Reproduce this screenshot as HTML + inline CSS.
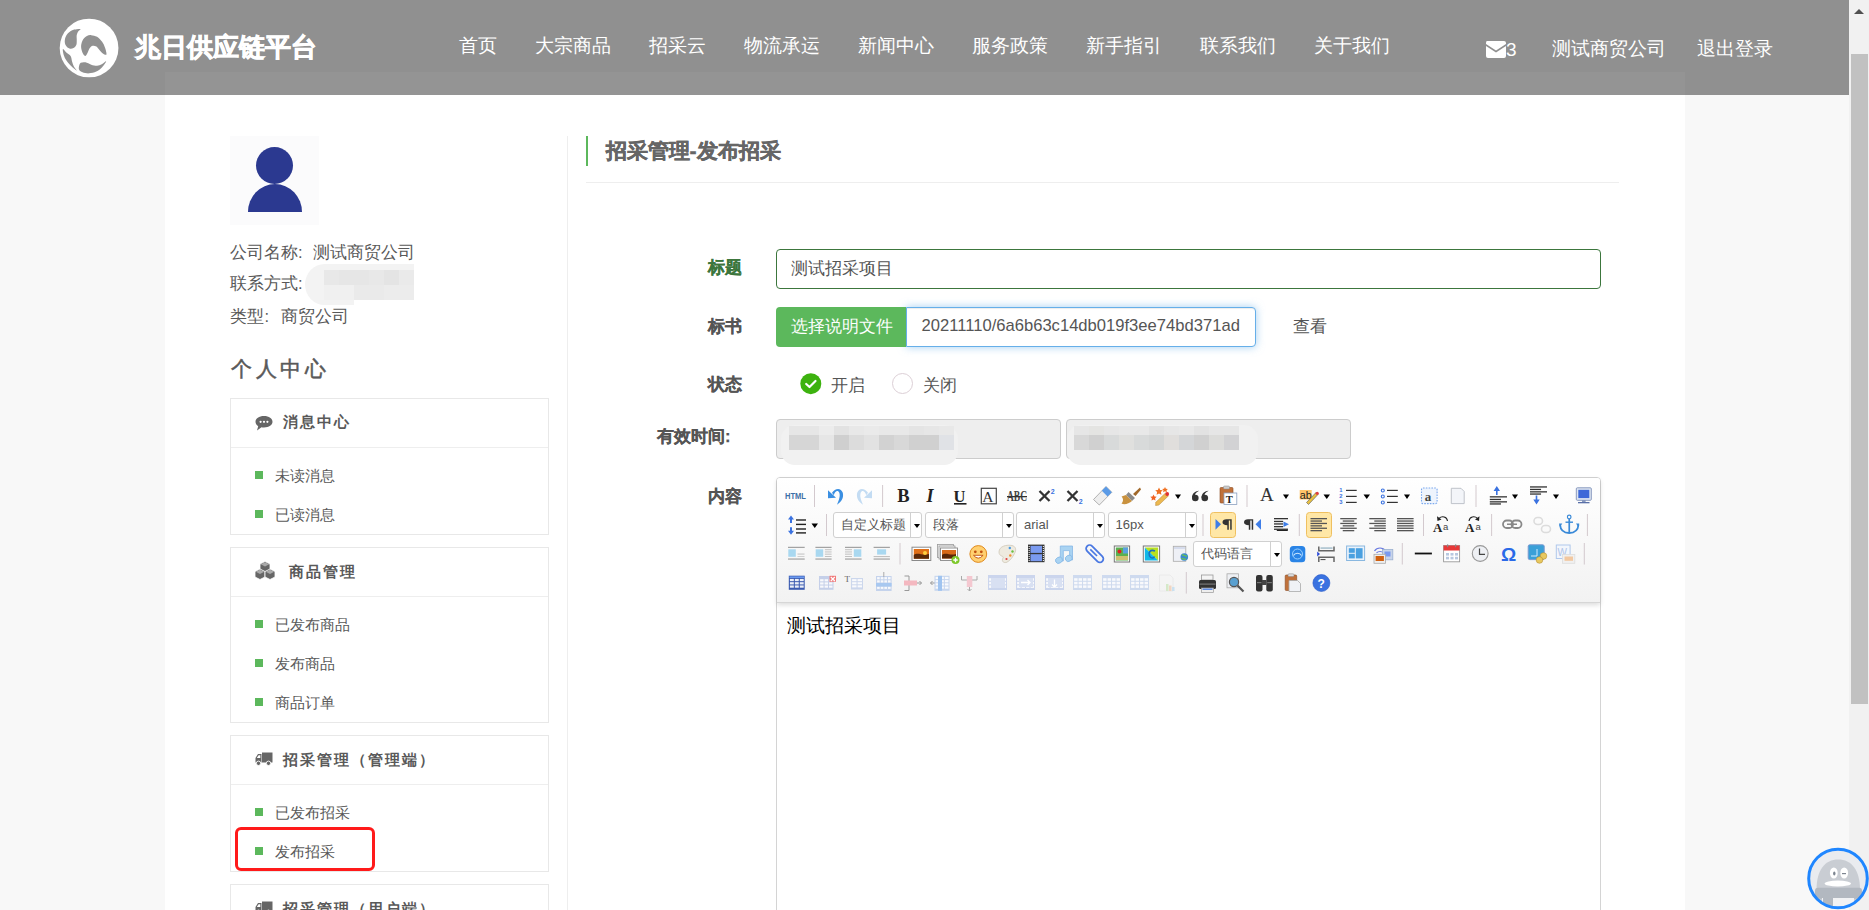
<!DOCTYPE html>
<html><head><meta charset="utf-8">
<style>
*{margin:0;padding:0;box-sizing:border-box}
html,body{width:1869px;height:910px;overflow:hidden;background:#f8f8f8;font-family:"Liberation Sans",sans-serif}
.a{position:absolute}
.t{position:absolute;white-space:nowrap;line-height:1}
#container{left:165px;top:72px;width:1520px;height:838px;background:#fff}
#header{left:0;top:0;width:1849px;height:95px;background:rgba(0,0,0,0.42)}
#sb{left:1849px;top:0;width:20px;height:910px;background:#f1f1f1}
#thumb{left:1851px;top:54px;width:17px;height:650px;background:#c1c1c1}
.nav{color:#fff;font-size:19px}
.side{color:#595959;font-size:16.5px}
.box{position:absolute;left:230px;width:319px;border:1px solid #e8e8e8;background:#fff}
.boxdiv{position:absolute;left:231px;width:317px;height:1px;background:#eeeeee}
.gsq{position:absolute;left:255px;width:8px;height:8px;background:#5cb85c}
.item{position:absolute;left:275px;color:#595959;font-size:15px;line-height:1;white-space:nowrap}
.bh{position:absolute;color:#595959;font-size:14.5px;font-weight:bold;letter-spacing:2px;line-height:1;white-space:nowrap;font-family:"Liberation Serif",serif}
.lbl{position:absolute;font-size:16.5px;font-weight:bold;color:#555;-webkit-text-stroke:0.25px currentColor;line-height:1;white-space:nowrap}
.combo{position:absolute;width:89px;height:26px;border:1px solid #d0d0d0;border-radius:3px;background:#fff}
.combo:after{content:"";position:absolute;right:10px;top:-1px;width:1px;height:26px;background:#d0d0d0}
.combo:before{content:"";position:absolute;right:1px;top:10.5px;border-left:3.5px solid transparent;border-right:3.5px solid transparent;border-top:4.5px solid #000}
.ct{position:absolute;left:7px;top:5px;font-size:13px;line-height:1;color:#555;white-space:nowrap;overflow:hidden}
</style></head><body>
<div id="container" class="a"></div>

<!-- sidebar -->
<div class="a" style="left:230px;top:136px;width:89px;height:89px;background:#fbfbfc"></div>
<div class="a" style="left:256px;top:147px;width:37px;height:37px;border-radius:50%;background:#2b3990"></div>
<div class="a" style="left:248px;top:184px;width:54px;height:28px;border-radius:27px 27px 0 0/28px 28px 0 0;background:#2b3990;box-shadow:0 0 0 0 #fff"></div>

<div class="t side" style="left:230px;top:243.5px">公司名称</div><div class="t side" style="left:298px;top:243.5px">:</div><div class="t side" style="left:313px;top:243.5px">测试商贸公司</div>
<div class="t side" style="left:230px;top:275px">联系方式</div><div class="t side" style="left:298px;top:275px">:</div>
<div class="a" style="left:305px;top:264px;width:109px;height:41px;background:#f3f3f3;border-radius:20px 0 0 20px/21px 0 0 21px"></div><div class="a" style="left:354px;top:299.7px;width:60px;height:6px;background:#fff"></div><div class="a" style="left:324px;top:270px;width:15px;height:15px;background:#e8e8e8"></div><div class="a" style="left:324px;top:285px;width:15px;height:15px;background:#f0f0f0"></div><div class="a" style="left:339px;top:270px;width:15px;height:15px;background:#e6e6e6"></div><div class="a" style="left:339px;top:285px;width:15px;height:15px;background:#f0f0f0"></div><div class="a" style="left:354px;top:270px;width:15px;height:15px;background:#e6e6e6"></div><div class="a" style="left:354px;top:285px;width:15px;height:15px;background:#eaeaea"></div><div class="a" style="left:369px;top:270px;width:15px;height:15px;background:#e8e8e8"></div><div class="a" style="left:369px;top:285px;width:15px;height:15px;background:#eaeaea"></div><div class="a" style="left:384px;top:270px;width:15px;height:15px;background:#e4e4e4"></div><div class="a" style="left:384px;top:285px;width:15px;height:15px;background:#ececec"></div><div class="a" style="left:399px;top:270px;width:15px;height:15px;background:#eaeaea"></div><div class="a" style="left:399px;top:285px;width:15px;height:15px;background:#ececec"></div>
<div class="t side" style="left:230px;top:307.5px">类型</div><div class="t side" style="left:264.5px;top:307.5px">:</div><div class="t side" style="left:280.5px;top:307.5px">商贸公司</div>

<div class="t" style="left:231px;top:359px;font-size:21px;letter-spacing:3.5px;color:#595959;-webkit-text-stroke:0.5px #595959;font-family:'Liberation Serif',serif">个人中心</div>

<div class="a" style="left:567px;top:136px;width:1px;height:774px;background:#eeeeee"></div>

<div class="box" style="top:398px;height:137px"></div>
<div class="boxdiv" style="top:447px"></div>
<svg class="a" style="left:255px;top:415px" width="18" height="16" viewBox="0 0 18 16"><path d="M9,1 C14,1 17.5,3.5 17.5,6.8 C17.5,10 14,12.5 9,12.5 C8,12.5 7.2,12.4 6.5,12.2 L2,15.5 L3.2,11.3 C1.5,10.2 0.5,8.6 0.5,6.8 C0.5,3.5 4,1 9,1Z" fill="#666"/><circle cx="5.6" cy="6.8" r="1.1" fill="#fff"/><circle cx="9" cy="6.8" r="1.1" fill="#fff"/><circle cx="12.4" cy="6.8" r="1.1" fill="#fff"/></svg>
<div class="bh" style="left:283px;top:414.5px">消息中心</div>
<div class="gsq" style="top:471px"></div><div class="item" style="top:468px">未读消息</div>
<div class="gsq" style="top:510px"></div><div class="item" style="top:507px">已读消息</div>

<div class="box" style="top:547px;height:176px"></div>
<div class="boxdiv" style="top:596px"></div>
<svg class="a" style="left:254px;top:561px" width="22" height="19" viewBox="0 0 22 19"><g fill="#666" stroke="#fff" stroke-width="0.8"><path d="M11,0.5 L16,3 L16,8.5 L11,11 L6,8.5 L6,3Z"/><path d="M6,8 L11,10.5 L11,16 L6,18.5 L1,16 L1,10.5Z"/><path d="M16,8 L21,10.5 L21,16 L16,18.5 L11,16 L11,10.5Z"/></g><g fill="#aaa"><path d="M11,1.3 L15.2,3.3 L11,5.4 L6.8,3.3Z"/><path d="M6,8.8 L10.2,10.8 L6,12.9 L1.8,10.8Z"/><path d="M16,8.8 L20.2,10.8 L16,12.9 L11.8,10.8Z"/></g></svg>
<div class="bh" style="left:288.5px;top:564.5px">商品管理</div>
<div class="gsq" style="top:620px"></div><div class="item" style="top:617px">已发布商品</div>
<div class="gsq" style="top:659px"></div><div class="item" style="top:656px">发布商品</div>
<div class="gsq" style="top:698px"></div><div class="item" style="top:695px">商品订单</div>

<div class="box" style="top:735px;height:137px"></div>
<div class="boxdiv" style="top:784px"></div>
<svg class="a" style="left:255px;top:752px" width="18" height="14" viewBox="0 0 18 14"><path d="M7,0.5 H17.5 V10.5 H7Z" fill="#666"/><path d="M0.5,6 L3,2 H6.5 V10.5 H0.5Z" fill="#666"/><path d="M1.8,6 L3.6,3.2 H5.3 V6Z" fill="#fff"/><circle cx="3.5" cy="11.3" r="2.2" fill="#666" stroke="#fff" stroke-width="0.9"/><circle cx="13.5" cy="11.3" r="2.2" fill="#666" stroke="#fff" stroke-width="0.9"/></svg>
<div class="bh" style="left:282.5px;top:753px">招采管理（管理端）</div>
<div class="gsq" style="top:808px"></div><div class="item" style="top:805px">已发布招采</div>
<div class="gsq" style="top:847px"></div><div class="item" style="top:844px">发布招采</div>
<div class="a" style="left:235px;top:827px;width:140px;height:44px;border:3.5px solid #ff1a1a;border-radius:6px"></div>

<div class="box" style="top:884px;height:100px"></div>
<svg class="a" style="left:255px;top:901px" width="18" height="14" viewBox="0 0 18 14"><path d="M7,0.5 H17.5 V10.5 H7Z" fill="#666"/><path d="M0.5,6 L3,2 H6.5 V10.5 H0.5Z" fill="#666"/><path d="M1.8,6 L3.6,3.2 H5.3 V6Z" fill="#fff"/><circle cx="3.5" cy="11.3" r="2.2" fill="#666" stroke="#fff" stroke-width="0.9"/><circle cx="13.5" cy="11.3" r="2.2" fill="#666" stroke="#fff" stroke-width="0.9"/></svg>
<div class="bh" style="left:282.5px;top:902px">招采管理（用户端）</div>

<!-- main form -->
<div class="a" style="left:586px;top:136px;width:2px;height:30px;background:#5cb85c"></div>
<div class="t" style="left:605.5px;top:139.5px;font-size:21.2px;font-weight:bold;color:#666;-webkit-text-stroke:0.4px #666">招采管理-发布招采</div>
<div class="a" style="left:586px;top:182px;width:1033px;height:1px;background:#eeeeee"></div>

<div class="lbl" style="left:708px;top:259px;color:#3c763d">标题</div>
<div class="a" style="left:776px;top:249px;width:825px;height:40px;border:1px solid #3c763d;border-radius:4px;background:#fff"></div>
<div class="t" style="left:791px;top:260px;font-size:16.5px;color:#555">测试招采项目</div>

<div class="lbl" style="left:708px;top:318px">标书</div>
<div class="a" style="left:906px;top:307px;width:350px;height:40px;border:1px solid #66afe9;border-radius:0 4px 4px 0;background:#fff;box-shadow:inset 0 1px 1px rgba(0,0,0,.075),0 0 8px rgba(102,175,233,.6)"></div>
<div class="a" style="left:776px;top:307px;width:130px;height:40px;background:#5cb85c;border-radius:4px 0 0 4px"></div>
<div class="t" style="left:791px;top:318px;font-size:16.5px;color:#fff">选择说明文件</div>
<div class="t" style="left:921.5px;top:317.5px;font-size:16.6px;color:#555">20211110/6a6b63c14db019f3ee74bd371ad</div>
<div class="t" style="left:1293px;top:318px;font-size:16.5px;color:#555">查看</div>

<div class="lbl" style="left:708px;top:376px">状态</div>
<svg class="a" style="left:800px;top:373px" width="22" height="22" viewBox="0 0 22 22"><circle cx="10.8" cy="10.7" r="10.5" fill="#3db20f"/><path d="M6.2,11 L9.5,14 L15.5,8" fill="none" stroke="#fff" stroke-width="2.2" stroke-linecap="round" stroke-linejoin="round"/></svg>
<div class="t" style="left:831px;top:377px;font-size:16.5px;color:#555">开启</div>
<div class="a" style="left:892px;top:373px;width:21px;height:21px;border:1px solid #dccfd6;border-radius:50%"></div>
<div class="t" style="left:923px;top:377px;font-size:16.5px;color:#555">关闭</div>

<div class="lbl" style="left:657px;top:428px">有效时间:</div>
<div class="a" style="left:776px;top:419px;width:285px;height:40px;background:#eeeeee;border:1px solid #cccccc;border-radius:4px"></div>
<div class="a" style="left:1066px;top:419px;width:285px;height:40px;background:#eeeeee;border:1px solid #cccccc;border-radius:4px"></div>

<div class="a" style="left:781px;top:424.6px;width:177px;height:40.4px;background:#f1f1f1;border-radius:14px"></div><div class="a" style="left:789px;top:426px;width:15px;height:9px;background:#e6e6e6"></div><div class="a" style="left:789px;top:435px;width:15px;height:15px;background:#d6d6d6"></div><div class="a" style="left:804px;top:426px;width:15px;height:9px;background:#e6e6e6"></div><div class="a" style="left:804px;top:435px;width:15px;height:15px;background:#d6d6d6"></div><div class="a" style="left:819px;top:426px;width:15px;height:9px;background:#ececec"></div><div class="a" style="left:819px;top:435px;width:15px;height:15px;background:#e6e6e6"></div><div class="a" style="left:834px;top:426px;width:15px;height:9px;background:#e2e2e2"></div><div class="a" style="left:834px;top:435px;width:15px;height:15px;background:#cfcfcf"></div><div class="a" style="left:849px;top:426px;width:15px;height:9px;background:#e8e8e8"></div><div class="a" style="left:849px;top:435px;width:15px;height:15px;background:#dcdcdc"></div><div class="a" style="left:864px;top:426px;width:15px;height:9px;background:#eaeaea"></div><div class="a" style="left:864px;top:435px;width:15px;height:15px;background:#e2e2e2"></div><div class="a" style="left:879px;top:426px;width:15px;height:9px;background:#e8e8e8"></div><div class="a" style="left:879px;top:435px;width:15px;height:15px;background:#d2d2d2"></div><div class="a" style="left:894px;top:426px;width:15px;height:9px;background:#e8e8e8"></div><div class="a" style="left:894px;top:435px;width:15px;height:15px;background:#d8d8d8"></div><div class="a" style="left:909px;top:426px;width:15px;height:9px;background:#e4e4e4"></div><div class="a" style="left:909px;top:435px;width:15px;height:15px;background:#d0d0d0"></div><div class="a" style="left:924px;top:426px;width:15px;height:9px;background:#e6e6e6"></div><div class="a" style="left:924px;top:435px;width:15px;height:15px;background:#d0d0d0"></div><div class="a" style="left:939px;top:426px;width:15px;height:9px;background:#e8e8e8"></div><div class="a" style="left:939px;top:435px;width:15px;height:15px;background:#e0e2e6"></div><div class="a" style="left:1067px;top:424.6px;width:191px;height:40.4px;background:#f1f1f1;border-radius:14px"></div><div class="a" style="left:1074px;top:426px;width:15px;height:9px;background:#e6e6e6"></div><div class="a" style="left:1074px;top:435px;width:15px;height:15px;background:#d8d8d8"></div><div class="a" style="left:1089px;top:426px;width:15px;height:9px;background:#e4e4e2"></div><div class="a" style="left:1089px;top:435px;width:15px;height:15px;background:#d0d0d0"></div><div class="a" style="left:1104px;top:426px;width:15px;height:9px;background:#e6e6e6"></div><div class="a" style="left:1104px;top:435px;width:15px;height:15px;background:#d8dada"></div><div class="a" style="left:1119px;top:426px;width:15px;height:9px;background:#e8e8e8"></div><div class="a" style="left:1119px;top:435px;width:15px;height:15px;background:#e0e0de"></div><div class="a" style="left:1134px;top:426px;width:15px;height:9px;background:#e8e8e8"></div><div class="a" style="left:1134px;top:435px;width:15px;height:15px;background:#d8dada"></div><div class="a" style="left:1149px;top:426px;width:15px;height:9px;background:#e2e2e2"></div><div class="a" style="left:1149px;top:435px;width:15px;height:15px;background:#d4d6d6"></div><div class="a" style="left:1164px;top:426px;width:15px;height:9px;background:#e6e6e6"></div><div class="a" style="left:1164px;top:435px;width:15px;height:15px;background:#e0dedc"></div><div class="a" style="left:1179px;top:426px;width:15px;height:9px;background:#e8e8e8"></div><div class="a" style="left:1179px;top:435px;width:15px;height:15px;background:#d4d6d8"></div><div class="a" style="left:1194px;top:426px;width:15px;height:9px;background:#e2e2e2"></div><div class="a" style="left:1194px;top:435px;width:15px;height:15px;background:#d0d0d0"></div><div class="a" style="left:1209px;top:426px;width:15px;height:9px;background:#e6e6e6"></div><div class="a" style="left:1209px;top:435px;width:15px;height:15px;background:#dcdcda"></div><div class="a" style="left:1224px;top:426px;width:15px;height:9px;background:#e6e6e6"></div><div class="a" style="left:1224px;top:435px;width:15px;height:15px;background:#d2d2d4"></div>
<div class="lbl" style="left:708px;top:488px">内容</div>
<div class="a" id="editor" style="left:776px;top:477px;width:825px;height:440px;border:1px solid #d4d4d4;border-radius:4px;background:#fff"></div>
<div class="a" style="left:777px;top:478px;width:823px;height:125px;border-radius:3px 3px 0 0;background:linear-gradient(#ffffff,#f2f2f2);box-shadow:0 2px 5px rgba(0,0,0,.14)"></div>
<div class="a" style="left:777px;top:602px;width:823px;height:1px;background:#d6d6d6"></div>
<!--TB--><div class="combo" style="left:833px;top:512px"><div class="ct" style="width:69px">自定义标题</div></div>
<div class="combo" style="left:925px;top:512px"><div class="ct">段落</div></div>
<div class="combo" style="left:1016px;top:512px"><div class="ct">arial</div></div>
<div class="combo" style="left:1107.5px;top:512px"><div class="ct">16px</div></div>
<div class="combo" style="left:1193px;top:541px"><div class="ct">代码语言</div></div>
<svg class="a" style="left:0;top:0" width="1869" height="910" viewBox="0 0 1869 910"><text x="785" y="498.6" font-family="Liberation Sans" font-weight="bold" font-size="8.2" fill="#3d70a8" textLength="21" lengthAdjust="spacingAndGlyphs">HTML</text><rect x="814.0" y="485" width="1" height="22" fill="#d3c9ce"/><path d="M828,490.2 L828,498.3 L836,497.7Z M832,492.8 C835,488 841,487.2 842.8,492.8 C844,497.5 841.5,502 837,504.8 C839,500 840.6,496 839.2,492.6 C838,490 835.2,490.6 833.8,495.2Z" fill="#3a8fe2"/><path d="M872.0,490.2 L872.0,498.3 L864.0,497.7Z M868.0,492.8 C865.0,488 859.0,487.2 857.2,492.8 C856.0,497.5 858.5,502 863.0,504.8 C861.0,500 859.4,496 860.8,492.6 C862.0,490 864.8,490.6 866.2,495.2Z" fill="#c3dcf3"/><rect x="882.1" y="485" width="1" height="22" fill="#d3c9ce"/><text x="897.3" y="502.3" font-family="Liberation Serif" font-weight="bold" font-size="18.5" fill="#222">B</text><text x="926.5" y="502.2" font-family="Liberation Serif" font-weight="bold" font-style="italic" font-size="18" fill="#222">I</text><text x="953.5" y="502" font-family="Liberation Serif" font-weight="bold" font-size="16.5" fill="#222">U</text><rect x="954" y="503" width="12.5" height="1.6" fill="#222"/><rect x="981.3" y="488.3" width="15" height="15.5" fill="none" stroke="#444" stroke-width="1.2"/><text x="982.3" y="501.6" font-family="Liberation Serif" font-size="15.5" fill="#333">A</text><text x="1007" y="501.2" font-family="Liberation Serif" font-weight="bold" font-size="14" fill="#444" textLength="20" lengthAdjust="spacingAndGlyphs">ABC</text><rect x="1007" y="496" width="20" height="1.3" fill="#333"/><path d="M1039.5,491 L1049.5,501 M1049.5,491 L1039.5,501" stroke="#333" stroke-width="2.3"/><text x="1050.8" y="494" font-family="Liberation Sans" font-weight="bold" font-size="7" fill="#3a72e0">2</text><path d="M1067.5,491 L1077.5,501 M1077.5,491 L1067.5,501" stroke="#333" stroke-width="2.3"/><text x="1078.8" y="503.5" font-family="Liberation Sans" font-weight="bold" font-size="7" fill="#3a72e0">2</text><path d="M1093.5,499.5 L1106,486.5 L1111.8,492.3 L1099.3,505Z" fill="#eeeeee" stroke="#a0a0a0" stroke-width="0.8"/><path d="M1101.8,490.8 L1106,486.5 L1111.8,492.3 L1107.6,496.6Z" fill="#5a9ae6"/><path d="M1133,494 L1140,487.5 L1141,489.5 L1135.5,496Z" fill="#a0682a"/><path d="M1128.5,492 L1135,498 L1132,501 L1126,495Z" fill="#8a8a8a"/><path d="M1126,495 L1132,501 C1129,504 1124,505 1121.5,503.5 C1124,501 1123,498 1121.6,496.5 C1123,496 1124.5,495.5 1126,495Z" fill="#c9923f"/><path d="M1155.8,502.3 L1165.3,493.2 L1168.3,496 L1158.8,505.1 L1155.6,505.5Z" fill="#ecb850" stroke="#b08030" stroke-width="0.5"/><circle cx="1167.2" cy="494" r="1.9" fill="#e03030"/><path d="M1159,487.5 l1.2,2.5 2.6,0.3 -1.9,1.8 0.5,2.6 -2.4,-1.3 -2.4,1.3 0.5,-2.6 -1.9,-1.8 2.6,-0.3Z" fill="#f07020"/><path d="M1153.5,494.5 l1,2 2.2,0.3 -1.6,1.5 0.4,2.2 -2,-1.1 -2,1.1 0.4,-2.2 -1.6,-1.5 2.2,-0.3Z" fill="#f06020"/><path d="M1165,487 l0.9,1.8 2,0.2 -1.4,1.3 0.4,2 -1.9,-1 -1.9,1 0.4,-2 -1.4,-1.3 2,-0.2Z" fill="#f07020"/><path d="M1175,494.5 H1181 L1178.0,499.0Z" fill="#000"/><circle cx="1195.3" cy="498" r="3.3" fill="#333"/><path d="M1192.0,498 C1192.0,494 1194.3,491.5 1199.1,490.8 C1195.8,492.5 1194.8,494.5 1195.3,495Z" fill="#333"/><circle cx="1204.8" cy="498" r="3.3" fill="#333"/><path d="M1201.5,498 C1201.5,494 1203.8,491.5 1208.6,490.8 C1205.3,492.5 1204.3,494.5 1204.8,495Z" fill="#333"/><rect x="1220" y="487.5" width="13" height="15.5" rx="1" fill="#c0713a" stroke="#8a4a20" stroke-width="0.6"/><rect x="1223.5" y="486" width="6" height="3" rx="1" fill="#ccc" stroke="#888" stroke-width="0.5"/><rect x="1224" y="493" width="12.8" height="11.5" fill="#fff" stroke="#8aa0c0" stroke-width="0.8"/><text x="1225.8" y="503.2" font-family="Liberation Serif" font-weight="bold" font-size="10.5" fill="#222">T</text><rect x="1246.5" y="485" width="1" height="22" fill="#d3c9ce"/><text x="1260" y="501.2" font-family="Liberation Serif" font-size="19" fill="#333">A</text><path d="M1283,494.5 H1289 L1286.0,499.0Z" fill="#000"/><rect x="1299.7" y="490" width="12" height="9.5" fill="#ffc46a"/><text x="1299.7" y="498.8" font-family="Liberation Sans" font-size="10" fill="#222" textLength="12" lengthAdjust="spacingAndGlyphs">ab</text><path d="M1306.5,502.5 L1316,492.5 L1318,494.5 L1308.5,504.5Z" fill="#e8c040" stroke="#555" stroke-width="0.6"/><circle cx="1317.2" cy="493.3" r="1.6" fill="#e04040"/><path d="M1323.5,494.5 H1330 L1326.75,499.0Z" fill="#000"/><text x="1339.2" y="492.2" font-family="Liberation Sans" font-weight="bold" font-size="5.8" fill="#3a72e0">1</text><text x="1339.2" y="498.2" font-family="Liberation Sans" font-weight="bold" font-size="5.8" fill="#3a72e0">2</text><text x="1339.2" y="504.4" font-family="Liberation Sans" font-weight="bold" font-size="5.8" fill="#3a72e0">3</text><rect x="1346" y="489.8" width="10.700000000000045" height="1.2" fill="#333"/><rect x="1346" y="495.8" width="10.700000000000045" height="1.2" fill="#333"/><rect x="1346" y="501.8" width="10.700000000000045" height="1.2" fill="#333"/><path d="M1363.5,494.5 H1370 L1366.75,499.0Z" fill="#000"/><circle cx="1382.8" cy="490.5" r="1.5" fill="none" stroke="#3a72e0" stroke-width="1.1"/><circle cx="1382.8" cy="496.5" r="1.5" fill="none" stroke="#3a72e0" stroke-width="1.1"/><circle cx="1382.8" cy="502.5" r="1.5" fill="none" stroke="#3a72e0" stroke-width="1.1"/><rect x="1387" y="489.8" width="10.799999999999955" height="1.2" fill="#333"/><rect x="1387" y="495.8" width="10.799999999999955" height="1.2" fill="#333"/><rect x="1387" y="501.8" width="10.799999999999955" height="1.2" fill="#333"/><path d="M1404,494.5 H1410 L1407.0,499.0Z" fill="#000"/><rect x="1421.5" y="488" width="15.6" height="15.6" rx="1.5" fill="#eef4fd" stroke="#7aa8ee" stroke-width="1.1" stroke-dasharray="1.6,1.2"/><text x="1424.8" y="500.8" font-family="Liberation Serif" font-weight="bold" font-size="13" fill="#444">a</text><path d="M1451.3,488.3 H1461 L1464.2,491.5 V503.6 H1451.3Z" fill="#f3f5f9" stroke="#b8bcc4" stroke-width="0.9"/><rect x="1475.5" y="485" width="1" height="22" fill="#d3c9ce"/><path d="M1496.8,486 L1500,491 H1497.6 V495 H1496 V491 H1493.6Z" fill="#3a72e0"/><rect x="1489.8" y="496.2" width="17.200000000000045" height="1.3" fill="#333"/><rect x="1489.8" y="498.8" width="11.180000000000064" height="1.3" fill="#333"/><rect x="1489.8" y="501.2" width="17.200000000000045" height="1.3" fill="#333"/><rect x="1489.8" y="503.3" width="11.180000000000064" height="1.3" fill="#333"/><path d="M1512,494.5 H1518 L1515.0,499.0Z" fill="#000"/><rect x="1530" y="486.3" width="17" height="1.3" fill="#333"/><rect x="1530" y="488.8" width="11.049999999999955" height="1.3" fill="#333"/><rect x="1530" y="491.2" width="17" height="1.3" fill="#333"/><rect x="1530" y="493.4" width="11.049999999999955" height="1.3" fill="#333"/><path d="M1536.5,504.5 L1533.3,499.5 H1535.7 V495.5 H1537.3 V499.5 H1539.7Z" fill="#3a72e0"/><path d="M1553,494.5 H1559 L1556.0,499.0Z" fill="#000"/><rect x="1576.3" y="487.8" width="15" height="12.5" rx="1" fill="#dfe6f2" stroke="#7d8fb8" stroke-width="0.9"/><rect x="1578.3" y="489.8" width="11" height="8.3" fill="#3e68d8"/><rect x="1582" y="500.3" width="3.6" height="1.6" fill="#7d8fb8"/><rect x="1578" y="502" width="11.5" height="1.3" fill="#5a70a8"/><path d="M791,515.5 L794,519.5 H792 V523 H790 V519.5 H788Z" fill="#3a72e0"/><path d="M791,534.8 L794,530.8 H792 V527.3 H790 V530.8 H788Z" fill="#3a72e0"/><rect x="796" y="519.3" width="10" height="1.4" fill="#222"/><rect x="796" y="523.7" width="10" height="1.4" fill="#222"/><rect x="796" y="528.3" width="10" height="1.4" fill="#222"/><rect x="796" y="532.2" width="10" height="1.4" fill="#222"/><path d="M811.5,523.5 H818 L814.75,528.0Z" fill="#000"/><rect x="826.0" y="514" width="1" height="22" fill="#d3c9ce"/><rect x="1202.5" y="514" width="1" height="22" fill="#d3c9ce"/><rect x="1210.5" y="512.5" width="25" height="25" rx="3" fill="#ffe7a6" stroke="#efc060" stroke-width="1"/><path d="M1215.5,519 L1221,524.3 L1215.5,529.8Z" fill="#3f7ee8"/><path d="M1226.5,519.3 H1231.7 V529.8 H1230.2 V520.6 H1228.8 V529.8 H1227.3 V525.2 C1224,525.2 1222.5,524 1222.5,522.3 C1222.5,520.5 1224,519.3 1226.5,519.3Z" fill="#333"/><path d="M1248,519.3 H1253.2 V529.8 H1251.7 V520.6 H1250.3 V529.8 H1248.8 V525.2 C1245.5,525.2 1244,524 1244,522.3 C1244,520.5 1245.5,519.3 1248,519.3Z" fill="#333"/><path d="M1261,519 L1255.5,524.3 L1261,529.8Z" fill="#3f7ee8"/><rect x="1274" y="518" width="14" height="1.3" fill="#333"/><rect x="1274" y="520.8" width="9.099999999999909" height="1.3" fill="#333"/><rect x="1274" y="523.3" width="9.099999999999909" height="1.3" fill="#333"/><rect x="1274" y="526" width="9.099999999999909" height="1.3" fill="#333"/><rect x="1274" y="528.6" width="14" height="1.3" fill="#333"/><path d="M1283.5,521.5 L1289,524.3 L1283.5,527Z" fill="#3f7ee8"/><rect x="1276.8" y="529.8" width="11" height="1.2" fill="#222"/><rect x="1298.8" y="514" width="1" height="22" fill="#d3c9ce"/><rect x="1306.5" y="512.5" width="25" height="25" rx="3" fill="#ffe7a6" stroke="#efc060" stroke-width="1"/><rect x="1310.5" y="518" width="16.5" height="1.3" fill="#555"/><rect x="1310.5" y="520.4" width="11.5" height="1.3" fill="#555"/><rect x="1310.5" y="522.8" width="16.5" height="1.3" fill="#555"/><rect x="1310.5" y="525.2" width="11.5" height="1.3" fill="#555"/><rect x="1310.5" y="527.6" width="16.5" height="1.3" fill="#555"/><rect x="1310.5" y="530" width="11.5" height="1.3" fill="#555"/><rect x="1340.25" y="518" width="16.5" height="1.3" fill="#555"/><rect x="1369.3" y="518" width="16.5" height="1.3" fill="#555"/><rect x="1397" y="518" width="16.6" height="1.3" fill="#555"/><rect x="1342.75" y="520.4" width="11.5" height="1.3" fill="#555"/><rect x="1374.3" y="520.4" width="11.5" height="1.3" fill="#555"/><rect x="1397" y="520.4" width="16.6" height="1.3" fill="#555"/><rect x="1340.25" y="522.8" width="16.5" height="1.3" fill="#555"/><rect x="1369.3" y="522.8" width="16.5" height="1.3" fill="#555"/><rect x="1397" y="522.8" width="16.6" height="1.3" fill="#555"/><rect x="1342.75" y="525.2" width="11.5" height="1.3" fill="#555"/><rect x="1374.3" y="525.2" width="11.5" height="1.3" fill="#555"/><rect x="1397" y="525.2" width="16.6" height="1.3" fill="#555"/><rect x="1340.25" y="527.6" width="16.5" height="1.3" fill="#555"/><rect x="1369.3" y="527.6" width="16.5" height="1.3" fill="#555"/><rect x="1397" y="527.6" width="16.6" height="1.3" fill="#555"/><rect x="1342.75" y="530" width="11.5" height="1.3" fill="#555"/><rect x="1374.3" y="530" width="11.5" height="1.3" fill="#555"/><rect x="1397" y="530" width="16.6" height="1.3" fill="#555"/><rect x="1423.0" y="514" width="1" height="22" fill="#d3c9ce"/><text x="1433" y="531.8" font-family="Liberation Serif" font-weight="bold" font-size="13" fill="#222">A</text><text x="1443" y="529.5" font-family="Liberation Sans" font-size="9.5" fill="#444">a</text><path d="M1447.5,521 C1447,516.5 1442,515.5 1439,518.3" fill="none" stroke="#222" stroke-width="1.1"/><path d="M1437,516.2 L1437.5,521 L1441.5,519.5Z" fill="#222"/><text x="1465" y="531.8" font-family="Liberation Serif" font-weight="bold" font-size="13" fill="#222">A</text><text x="1475.5" y="529.5" font-family="Liberation Sans" font-size="9.5" fill="#444">a</text><path d="M1469,521 C1469.5,516.5 1474.5,515.5 1477.5,518.3" fill="none" stroke="#222" stroke-width="1.1"/><path d="M1479.5,516.2 L1479,521 L1475,519.5Z" fill="#222"/><rect x="1491.1" y="514" width="1" height="22" fill="#d3c9ce"/><rect x="1503" y="520.5" width="10" height="7.5" rx="3.7" fill="none" stroke="#888" stroke-width="1.8"/><rect x="1511.5" y="520.5" width="10" height="7.5" rx="3.7" fill="none" stroke="#888" stroke-width="1.8"/><rect x="1507" y="523.5" width="10" height="1.5" fill="#888"/><rect x="1534" y="517.5" width="8.5" height="7" rx="3.5" fill="none" stroke="#dcdcdc" stroke-width="1.6"/><rect x="1541.5" y="525.5" width="9" height="7" rx="3.5" fill="none" stroke="#dcdcdc" stroke-width="1.6"/><circle cx="1569.2" cy="517" r="1.8" fill="none" stroke="#3a8ad8" stroke-width="1.2"/><rect x="1568.4" y="518.8" width="1.7" height="13.5" fill="#3a8ad8"/><rect x="1565.5" y="521.5" width="7.5" height="1.4" fill="#3a8ad8"/><path d="M1560,524.5 C1560.5,531 1565,533 1569.2,533 C1573.5,533 1578,531 1578.5,524.5" fill="none" stroke="#3a8ad8" stroke-width="1.8"/><path d="M1559,523.5 L1562.3,523.5 L1560,527Z M1579.3,523.5 L1576,523.5 L1578.3,527Z" fill="#3a8ad8"/><rect x="1586.9" y="514" width="1" height="22" fill="#d3c9ce"/><rect x="788" y="546.8" width="16.7" height="1.1" fill="#9a9a9a"/><rect x="788" y="558.5" width="16.7" height="1.1" fill="#9a9a9a"/><rect x="788.3" y="549.3" width="7.5" height="7.5" fill="#a9d8f0"/><rect x="797.5" y="553.6" width="7" height="0.9" fill="#bbb"/><rect x="797.5" y="556" width="7" height="0.9" fill="#ccc"/><rect x="815.4" y="546.8" width="16.2" height="1.1" fill="#9a9a9a"/><rect x="815.4" y="558.5" width="16.2" height="1.1" fill="#9a9a9a"/><rect x="815.6999999999999" y="549.3" width="7.5" height="7.5" fill="#a9d8f0"/><rect x="824.9" y="549.3" width="6.7" height="0.9" fill="#bbb"/><rect x="824.9" y="551.5" width="6.7" height="0.9" fill="#bbb"/><rect x="824.9" y="553.7" width="6.7" height="0.9" fill="#bbb"/><rect x="824.9" y="556" width="6.7" height="0.9" fill="#bbb"/><rect x="845" y="546.8" width="16.6" height="1.1" fill="#9a9a9a"/><rect x="845" y="558.5" width="16.6" height="1.1" fill="#9a9a9a"/><rect x="853.8" y="549.3" width="7.5" height="7.5" fill="#a9d8f0"/><rect x="845" y="549.3" width="7" height="0.9" fill="#bbb"/><rect x="845" y="551.5" width="7" height="0.9" fill="#bbb"/><rect x="845" y="553.7" width="7" height="0.9" fill="#bbb"/><rect x="845" y="556" width="7" height="0.9" fill="#bbb"/><rect x="873.6" y="546.8" width="16.3" height="1.1" fill="#9a9a9a"/><rect x="873.6" y="558.5" width="16.3" height="1.1" fill="#9a9a9a"/><rect x="877.1" y="549.3" width="9" height="5.3" fill="#a9d8f0"/><rect x="873.6" y="556.1" width="16.3" height="1" fill="#bbb"/><rect x="899.5" y="543" width="1" height="21.5" fill="#d3c9ce"/><rect x="912" y="547.2" width="18.8" height="13.3" fill="#fff" stroke="#8a8a8a" stroke-width="1"/><rect x="913.8" y="549" width="15.2" height="9.7" fill="#e07018"/><path d="M913.8,555 C918,552 922,556 929,554 V558.7 H913.8Z" fill="#5a2808"/><circle cx="925" cy="553" r="2" fill="#ffd040"/><rect x="937.5" y="544.6" width="16" height="13" fill="#f4f4f4" stroke="#999" stroke-width="0.8"/><rect x="939" y="546" width="16" height="13" fill="#f4f4f4" stroke="#999" stroke-width="0.8"/><rect x="940.5" y="548" width="17" height="12.5" fill="#fff" stroke="#888" stroke-width="0.9"/><rect x="942" y="550" width="14" height="8.5" fill="#d86a18"/><path d="M942,555 C946,552 950,556 956,554 V558.5 H942Z" fill="#5a2808"/><circle cx="955.5" cy="560" r="4" fill="#7cc828"/><path d="M953.3,560 H957.7 M955.5,557.8 V562.2" stroke="#fff" stroke-width="1.3"/><circle cx="978.3" cy="554" r="8.4" fill="#ffd070" stroke="#e08a20" stroke-width="1"/><circle cx="975.3" cy="551.8" r="1.4" fill="#c05010"/><circle cx="981.3" cy="551.8" r="1.4" fill="#c05010"/><path d="M973.5,555.3 Q978.3,561 983.1,555.3Z" fill="#fff" stroke="#c05010" stroke-width="0.9"/><path d="M999,552 C999,546 1007,544.5 1012,545.5 C1016,546.5 1016.5,550 1014.5,553.5 C1012.5,557 1011,560 1007,562.2 C1004,563.5 1001,561.5 1003,558 C1004.5,555.5 999,557 999,552Z" fill="#eeeadf" stroke="#cfc8b8" stroke-width="0.8"/><circle cx="1009.8" cy="548" r="1.2" fill="#4a9ae0"/><circle cx="1012.5" cy="551.5" r="1.2" fill="#6ac040"/><circle cx="1010.3" cy="555.5" r="1.2" fill="#f09030"/><circle cx="1006.5" cy="559" r="1.1" fill="#e04040"/><rect x="1028" y="544.6" width="16.5" height="17.6" fill="#333"/><rect x="1030.5" y="545.8" width="11.5" height="7.1" fill="#7a9af0"/><rect x="1030.5" y="554.2" width="11.5" height="7" fill="#7a9af0"/><rect x="1028.6" y="546" width="1.2" height="1" fill="#ddd"/><rect x="1042.8" y="546" width="1.2" height="1" fill="#ddd"/><rect x="1028.6" y="548" width="1.2" height="1" fill="#ddd"/><rect x="1042.8" y="548" width="1.2" height="1" fill="#ddd"/><rect x="1028.6" y="550" width="1.2" height="1" fill="#ddd"/><rect x="1042.8" y="550" width="1.2" height="1" fill="#ddd"/><rect x="1028.6" y="552" width="1.2" height="1" fill="#ddd"/><rect x="1042.8" y="552" width="1.2" height="1" fill="#ddd"/><rect x="1028.6" y="554" width="1.2" height="1" fill="#ddd"/><rect x="1042.8" y="554" width="1.2" height="1" fill="#ddd"/><rect x="1028.6" y="556" width="1.2" height="1" fill="#ddd"/><rect x="1042.8" y="556" width="1.2" height="1" fill="#ddd"/><rect x="1028.6" y="558" width="1.2" height="1" fill="#ddd"/><rect x="1042.8" y="558" width="1.2" height="1" fill="#ddd"/><rect x="1028.6" y="560" width="1.2" height="1" fill="#ddd"/><rect x="1042.8" y="560" width="1.2" height="1" fill="#ddd"/><path d="M1060.3,546 H1072.5 V560 H1069.6 V550.6 H1063.3 V561 H1060.3Z" fill="#a9d3f2" stroke="#86b8e6" stroke-width="0.8"/><ellipse cx="1059" cy="560.2" rx="3.6" ry="3" transform="rotate(-30 1059 560.2)" fill="#a9d3f2" stroke="#86b8e6" stroke-width="0.8"/><ellipse cx="1068.8" cy="558.3" rx="3.6" ry="3" transform="rotate(-30 1068.8 558.3)" fill="#a9d3f2" stroke="#86b8e6" stroke-width="0.8"/><g transform="rotate(-45 1094.7 553.7)"><rect x="1091.2" y="543" width="7" height="21.5" rx="3.5" fill="none" stroke="#4a78e2" stroke-width="1.8"/><path d="M1094.7,547.5 V557" stroke="#4a78e2" stroke-width="1.6"/></g><rect x="1114.3" y="546" width="15.3" height="16" fill="#fff" stroke="#777" stroke-width="1"/><rect x="1115.8" y="547.5" width="12.3" height="13" fill="#5ab050"/><rect x="1123" y="547.5" width="5" height="6" fill="#5aa0e0"/><circle cx="1119.5" cy="551.5" r="2" fill="#e02020"/><rect x="1116" y="556" width="12" height="4" fill="#d0c070"/><rect x="1143.3" y="546" width="16.3" height="16" fill="#fff" stroke="#777" stroke-width="1"/><path d="M1144.8,547.5 H1158.1 V560.5Z" fill="#b8e020"/><path d="M1144.8,547.5 L1158.1,560.5 H1144.8Z" fill="#10b8e8"/><path d="M1155,551 C1150,549 1148,553 1149.5,556 C1151,559 1154,558 1154.5,556.5" fill="none" stroke="#1a70c0" stroke-width="1.6"/><rect x="1173.3" y="546.3" width="12.5" height="15" fill="#eef0f6" stroke="#aaa" stroke-width="0.8"/><rect x="1174" y="547" width="11" height="2" fill="#d6dcec"/><circle cx="1184.3" cy="557" r="3.8" fill="#3a8ad0"/><path d="M1182,555 C1184,554.5 1185,556.5 1187,556 M1181.5,558.5 C1183,558 1184,560 1186,559" stroke="#6ac050" stroke-width="1.3" fill="none"/><rect x="1289.8" y="545.9" width="15.5" height="16.3" rx="3.5" fill="#2a84e6"/><circle cx="1297.5" cy="554" r="5" fill="none" stroke="#9ad0ff" stroke-width="1"/><path d="M1293.5,555.5 C1295,552.5 1300,552.5 1301.5,555.5" stroke="#cfe8ff" fill="none" stroke-width="1.1"/><path d="M1318.8,546.5 V550.8 H1334 V546.5" fill="none" stroke="#666" stroke-width="1.5"/><rect x="1320.5" y="547.5" width="12" height="1.1" fill="#8ab"/><path d="M1318.8,562 V557.3 H1334 V562" fill="none" stroke="#666" stroke-width="1.5"/><rect x="1320.5" y="559" width="5" height="1.1" fill="#555"/><path d="M1317.2,551.5 L1320,554 L1317.2,556.5Z" fill="#2a4ad8"/><rect x="1346.6" y="546" width="18" height="14.5" fill="#eaf2fa" stroke="#8ab8e0" stroke-width="1"/><rect x="1348.8" y="548.2" width="6" height="4.6" fill="#4aa0e0"/><rect x="1348.8" y="553.8" width="6" height="4.6" fill="#4aa0e0"/><rect x="1355.8" y="548.2" width="6.8" height="10.2" fill="#4aa0e0"/><path d="M1374.5,551 C1377,547 1383,547 1385.5,551" fill="none" stroke="#6a7ae0" stroke-width="1.2"/><path d="M1376.5,553 C1378,551 1382,551 1383.5,553" fill="none" stroke="#6a7ae0" stroke-width="1.2"/><rect x="1382.5" y="549.5" width="10.3" height="10.3" fill="#c8d4ea" stroke="#9ab0d0" stroke-width="0.8"/><rect x="1384.5" y="551.5" width="6" height="5" fill="#7a9af0"/><rect x="1374" y="554.3" width="11.5" height="9" fill="#eee" stroke="#aaa" stroke-width="0.8"/><rect x="1375.6" y="556" width="8.3" height="5" fill="#d06010"/><rect x="1401.8" y="543" width="1" height="21.5" fill="#d3c9ce"/><rect x="1414.8" y="552.6" width="17.1" height="1.8" fill="#111"/><rect x="1443.6" y="545.5" width="16" height="16.3" fill="#fff" stroke="#999" stroke-width="0.9"/><rect x="1443.6" y="545.5" width="16" height="5" fill="#e83838"/><rect x="1446" y="553" width="3" height="2.6" fill="#b8c8e0"/><rect x="1446" y="556.8" width="3" height="2.6" fill="#b8c8e0"/><rect x="1450.5" y="553" width="3" height="2.6" fill="#b8c8e0"/><rect x="1450.5" y="556.8" width="3" height="2.6" fill="#b8c8e0"/><rect x="1455" y="553" width="3" height="2.6" fill="#b8c8e0"/><rect x="1455" y="556.8" width="3" height="2.6" fill="#b8c8e0"/><rect x="1447" y="544.4" width="1.2" height="2.8" fill="#888"/><rect x="1455" y="544.4" width="1.2" height="2.8" fill="#888"/><circle cx="1480.2" cy="553.5" r="7.9" fill="#eef0f4" stroke="#999" stroke-width="1.1"/><path d="M1479.5,548.5 V554.3 H1485" fill="none" stroke="#444" stroke-width="1.2"/><text x="1501" y="561.2" font-family="Liberation Sans" font-weight="bold" font-size="19" fill="#2a6ae8">Ω</text><rect x="1528.2" y="544.8" width="16" height="14.8" rx="1.5" fill="#3aa0d8" stroke="#7a9ad0" stroke-width="1"/><path d="M1531,556 H1537 V549" stroke="#cfeaff" fill="none" stroke-width="1"/><circle cx="1543.5" cy="556" r="3.3" fill="#e8c860" stroke="#b89030" stroke-width="0.6"/><circle cx="1539.5" cy="560" r="3.3" fill="#e8c860" stroke="#b89030" stroke-width="0.6"/><rect x="1556.3" y="545" width="13.8" height="13.5" fill="#f2f6fc" stroke="#b0c8ec" stroke-width="1"/><text x="1557.5" y="556" font-family="Liberation Sans" font-size="10" fill="#b0c4e8">W</text><rect x="1562.5" y="554.5" width="12.3" height="8.8" fill="#f0f0f0" stroke="#ddd" stroke-width="0.8"/><rect x="1564.5" y="556.5" width="8.5" height="4.3" fill="#f2c8a0"/><rect x="1583.8" y="543" width="1" height="21.5" fill="#d3c9ce"/><g opacity="1"><rect x="788.8" y="575.7" width="15.9" height="14.1" fill="#3a5ab0"/><rect x="789.90" y="578.90" width="3.93" height="2.27" fill="#fff" opacity="0.9"/><rect x="794.83" y="578.90" width="3.93" height="2.27" fill="#fff" opacity="0.9"/><rect x="799.77" y="578.90" width="3.93" height="2.27" fill="#fff" opacity="0.9"/><rect x="789.90" y="582.17" width="3.93" height="2.27" fill="#fff" opacity="0.9"/><rect x="794.83" y="582.17" width="3.93" height="2.27" fill="#fff" opacity="0.9"/><rect x="799.77" y="582.17" width="3.93" height="2.27" fill="#fff" opacity="0.9"/><rect x="789.90" y="585.43" width="3.93" height="2.27" fill="#fff" opacity="0.9"/><rect x="794.83" y="585.43" width="3.93" height="2.27" fill="#fff" opacity="0.9"/><rect x="799.77" y="585.43" width="3.93" height="2.27" fill="#fff" opacity="0.9"/></g><rect x="789.5" y="576.4" width="14.5" height="1.6" fill="#6a9af0"/><g opacity="0.9"><rect x="819" y="576" width="14.5" height="13.8" fill="#c0cce8"/><rect x="820.10" y="579.20" width="3.47" height="2.17" fill="#fff" opacity="0.9"/><rect x="824.57" y="579.20" width="3.47" height="2.17" fill="#fff" opacity="0.9"/><rect x="829.03" y="579.20" width="3.47" height="2.17" fill="#fff" opacity="0.9"/><rect x="820.10" y="582.37" width="3.47" height="2.17" fill="#fff" opacity="0.9"/><rect x="824.57" y="582.37" width="3.47" height="2.17" fill="#fff" opacity="0.9"/><rect x="829.03" y="582.37" width="3.47" height="2.17" fill="#fff" opacity="0.9"/><rect x="820.10" y="585.53" width="3.47" height="2.17" fill="#fff" opacity="0.9"/><rect x="824.57" y="585.53" width="3.47" height="2.17" fill="#fff" opacity="0.9"/><rect x="829.03" y="585.53" width="3.47" height="2.17" fill="#fff" opacity="0.9"/></g><rect x="829.5" y="575.8" width="6.5" height="6" fill="#f07878"/><path d="M830.8,577 L834.8,581 M834.8,577 L830.8,581" stroke="#fff" stroke-width="1.2"/><text x="844.5" y="582" font-family="Liberation Serif" font-size="9" fill="#666">T</text><g opacity="0.9"><rect x="851" y="578" width="12" height="11.5" fill="#c8d4ec"/><rect x="852.10" y="579.10" width="4.45" height="2.10" fill="#fff" opacity="0.9"/><rect x="857.55" y="579.10" width="4.45" height="2.10" fill="#fff" opacity="0.9"/><rect x="852.10" y="582.20" width="4.45" height="2.10" fill="#fff" opacity="0.9"/><rect x="857.55" y="582.20" width="4.45" height="2.10" fill="#fff" opacity="0.9"/><rect x="852.10" y="585.30" width="4.45" height="2.10" fill="#fff" opacity="0.9"/><rect x="857.55" y="585.30" width="4.45" height="2.10" fill="#fff" opacity="0.9"/></g><g opacity="0.9"><rect x="876" y="576" width="15.6" height="15" fill="#c0d0ec"/><rect x="877.10" y="577.10" width="2.62" height="2.20" fill="#fff" opacity="0.9"/><rect x="880.73" y="577.10" width="2.62" height="2.20" fill="#fff" opacity="0.9"/><rect x="884.35" y="577.10" width="2.62" height="2.20" fill="#fff" opacity="0.9"/><rect x="887.98" y="577.10" width="2.62" height="2.20" fill="#fff" opacity="0.9"/><rect x="877.10" y="580.30" width="2.62" height="2.20" fill="#fff" opacity="0.9"/><rect x="880.73" y="580.30" width="2.62" height="2.20" fill="#fff" opacity="0.9"/><rect x="884.35" y="580.30" width="2.62" height="2.20" fill="#fff" opacity="0.9"/><rect x="887.98" y="580.30" width="2.62" height="2.20" fill="#fff" opacity="0.9"/><rect x="877.10" y="583.50" width="2.62" height="2.20" fill="#fff" opacity="0.9"/><rect x="880.73" y="583.50" width="2.62" height="2.20" fill="#fff" opacity="0.9"/><rect x="884.35" y="583.50" width="2.62" height="2.20" fill="#fff" opacity="0.9"/><rect x="887.98" y="583.50" width="2.62" height="2.20" fill="#fff" opacity="0.9"/><rect x="877.10" y="586.70" width="2.62" height="2.20" fill="#fff" opacity="0.9"/><rect x="880.73" y="586.70" width="2.62" height="2.20" fill="#fff" opacity="0.9"/><rect x="884.35" y="586.70" width="2.62" height="2.20" fill="#fff" opacity="0.9"/><rect x="887.98" y="586.70" width="2.62" height="2.20" fill="#fff" opacity="0.9"/></g><rect x="876" y="583" width="15.6" height="3.5" fill="#a8c8f0"/><path d="M883.8,572 V577" stroke="#aaa" stroke-width="1"/><path d="M904.5,576 H909 V590.5 H904.5" fill="none" stroke="#999" stroke-width="1"/><rect x="904" y="580.5" width="13" height="5" fill="#f4b8c0"/><path d="M917,583 H921.5 M919.5,581 L921.5,583 L919.5,585" stroke="#999" fill="none" stroke-width="1"/><path d="M930.5,583 H935 M932.5,581 L930.5,583 L932.5,585" stroke="#999" fill="none" stroke-width="1"/><g opacity="0.9"><rect x="934.5" y="575.8" width="15" height="15" fill="#c4d4ee"/><rect x="935.60" y="576.90" width="3.63" height="2.20" fill="#fff" opacity="0.9"/><rect x="940.23" y="576.90" width="3.63" height="2.20" fill="#fff" opacity="0.9"/><rect x="944.87" y="576.90" width="3.63" height="2.20" fill="#fff" opacity="0.9"/><rect x="935.60" y="580.10" width="3.63" height="2.20" fill="#fff" opacity="0.9"/><rect x="940.23" y="580.10" width="3.63" height="2.20" fill="#fff" opacity="0.9"/><rect x="944.87" y="580.10" width="3.63" height="2.20" fill="#fff" opacity="0.9"/><rect x="935.60" y="583.30" width="3.63" height="2.20" fill="#fff" opacity="0.9"/><rect x="940.23" y="583.30" width="3.63" height="2.20" fill="#fff" opacity="0.9"/><rect x="944.87" y="583.30" width="3.63" height="2.20" fill="#fff" opacity="0.9"/><rect x="935.60" y="586.50" width="3.63" height="2.20" fill="#fff" opacity="0.9"/><rect x="940.23" y="586.50" width="3.63" height="2.20" fill="#fff" opacity="0.9"/><rect x="944.87" y="586.50" width="3.63" height="2.20" fill="#fff" opacity="0.9"/></g><rect x="938" y="575.8" width="4" height="15" fill="#a0c4f0"/><path d="M961.5,576 V580 H977 V576" fill="none" stroke="#aaa" stroke-width="1"/><rect x="966.8" y="576" width="5.5" height="11" fill="#f4c8d0"/><path d="M969.5,587 V591 M967.5,589 L969.5,591 L971.5,589" stroke="#aaa" fill="none" stroke-width="1"/><g opacity="0.85"><rect x="988" y="575" width="19" height="15" fill="#c4d0ec"/><rect x="989.10" y="578.20" width="3.47" height="2.57" fill="#fff" opacity="0.9"/><rect x="993.58" y="578.20" width="3.47" height="2.57" fill="#fff" opacity="0.9"/><rect x="998.05" y="578.20" width="3.47" height="2.57" fill="#fff" opacity="0.9"/><rect x="1002.52" y="578.20" width="3.47" height="2.57" fill="#fff" opacity="0.9"/><rect x="989.10" y="581.77" width="3.47" height="2.57" fill="#fff" opacity="0.9"/><rect x="993.58" y="581.77" width="3.47" height="2.57" fill="#fff" opacity="0.9"/><rect x="998.05" y="581.77" width="3.47" height="2.57" fill="#fff" opacity="0.9"/><rect x="1002.52" y="581.77" width="3.47" height="2.57" fill="#fff" opacity="0.9"/><rect x="989.10" y="585.33" width="3.47" height="2.57" fill="#fff" opacity="0.9"/><rect x="993.58" y="585.33" width="3.47" height="2.57" fill="#fff" opacity="0.9"/><rect x="998.05" y="585.33" width="3.47" height="2.57" fill="#fff" opacity="0.9"/><rect x="1002.52" y="585.33" width="3.47" height="2.57" fill="#fff" opacity="0.9"/></g><g opacity="0.85"><rect x="1016" y="575" width="19" height="15" fill="#c4d0ec"/><rect x="1017.10" y="578.20" width="3.47" height="2.57" fill="#fff" opacity="0.9"/><rect x="1021.58" y="578.20" width="3.47" height="2.57" fill="#fff" opacity="0.9"/><rect x="1026.05" y="578.20" width="3.47" height="2.57" fill="#fff" opacity="0.9"/><rect x="1030.53" y="578.20" width="3.47" height="2.57" fill="#fff" opacity="0.9"/><rect x="1017.10" y="581.77" width="3.47" height="2.57" fill="#fff" opacity="0.9"/><rect x="1021.58" y="581.77" width="3.47" height="2.57" fill="#fff" opacity="0.9"/><rect x="1026.05" y="581.77" width="3.47" height="2.57" fill="#fff" opacity="0.9"/><rect x="1030.53" y="581.77" width="3.47" height="2.57" fill="#fff" opacity="0.9"/><rect x="1017.10" y="585.33" width="3.47" height="2.57" fill="#fff" opacity="0.9"/><rect x="1021.58" y="585.33" width="3.47" height="2.57" fill="#fff" opacity="0.9"/><rect x="1026.05" y="585.33" width="3.47" height="2.57" fill="#fff" opacity="0.9"/><rect x="1030.53" y="585.33" width="3.47" height="2.57" fill="#fff" opacity="0.9"/></g><g opacity="0.85"><rect x="1045" y="575" width="19" height="15" fill="#c4d0ec"/><rect x="1046.10" y="578.20" width="3.47" height="2.57" fill="#fff" opacity="0.9"/><rect x="1050.57" y="578.20" width="3.47" height="2.57" fill="#fff" opacity="0.9"/><rect x="1055.05" y="578.20" width="3.47" height="2.57" fill="#fff" opacity="0.9"/><rect x="1059.52" y="578.20" width="3.47" height="2.57" fill="#fff" opacity="0.9"/><rect x="1046.10" y="581.77" width="3.47" height="2.57" fill="#fff" opacity="0.9"/><rect x="1050.57" y="581.77" width="3.47" height="2.57" fill="#fff" opacity="0.9"/><rect x="1055.05" y="581.77" width="3.47" height="2.57" fill="#fff" opacity="0.9"/><rect x="1059.52" y="581.77" width="3.47" height="2.57" fill="#fff" opacity="0.9"/><rect x="1046.10" y="585.33" width="3.47" height="2.57" fill="#fff" opacity="0.9"/><rect x="1050.57" y="585.33" width="3.47" height="2.57" fill="#fff" opacity="0.9"/><rect x="1055.05" y="585.33" width="3.47" height="2.57" fill="#fff" opacity="0.9"/><rect x="1059.52" y="585.33" width="3.47" height="2.57" fill="#fff" opacity="0.9"/></g><rect x="991" y="578" width="14" height="10" fill="#d8e0f2"/><rect x="1019" y="578" width="14" height="9" fill="#d8e0f2"/><path d="M1021,582.5 H1030 M1027.5,580 L1030,582.5 L1027.5,585" stroke="#fff" stroke-width="1.3" fill="none"/><rect x="1048" y="578" width="14" height="9" fill="#d8e0f2"/><path d="M1054.5,579.5 V587 M1052,584.5 L1054.5,587 L1057,584.5" stroke="#fff" stroke-width="1.3" fill="none"/><g opacity="0.85"><rect x="1073" y="575" width="19" height="15" fill="#c8d6ee"/><rect x="1074.10" y="578.20" width="3.47" height="2.57" fill="#fff" opacity="0.9"/><rect x="1078.57" y="578.20" width="3.47" height="2.57" fill="#fff" opacity="0.9"/><rect x="1083.05" y="578.20" width="3.47" height="2.57" fill="#fff" opacity="0.9"/><rect x="1087.52" y="578.20" width="3.47" height="2.57" fill="#fff" opacity="0.9"/><rect x="1074.10" y="581.77" width="3.47" height="2.57" fill="#fff" opacity="0.9"/><rect x="1078.57" y="581.77" width="3.47" height="2.57" fill="#fff" opacity="0.9"/><rect x="1083.05" y="581.77" width="3.47" height="2.57" fill="#fff" opacity="0.9"/><rect x="1087.52" y="581.77" width="3.47" height="2.57" fill="#fff" opacity="0.9"/><rect x="1074.10" y="585.33" width="3.47" height="2.57" fill="#fff" opacity="0.9"/><rect x="1078.57" y="585.33" width="3.47" height="2.57" fill="#fff" opacity="0.9"/><rect x="1083.05" y="585.33" width="3.47" height="2.57" fill="#fff" opacity="0.9"/><rect x="1087.52" y="585.33" width="3.47" height="2.57" fill="#fff" opacity="0.9"/></g><g opacity="0.85"><rect x="1102" y="575" width="19" height="15" fill="#c8d6ee"/><rect x="1103.10" y="578.20" width="3.47" height="2.57" fill="#fff" opacity="0.9"/><rect x="1107.57" y="578.20" width="3.47" height="2.57" fill="#fff" opacity="0.9"/><rect x="1112.05" y="578.20" width="3.47" height="2.57" fill="#fff" opacity="0.9"/><rect x="1116.52" y="578.20" width="3.47" height="2.57" fill="#fff" opacity="0.9"/><rect x="1103.10" y="581.77" width="3.47" height="2.57" fill="#fff" opacity="0.9"/><rect x="1107.57" y="581.77" width="3.47" height="2.57" fill="#fff" opacity="0.9"/><rect x="1112.05" y="581.77" width="3.47" height="2.57" fill="#fff" opacity="0.9"/><rect x="1116.52" y="581.77" width="3.47" height="2.57" fill="#fff" opacity="0.9"/><rect x="1103.10" y="585.33" width="3.47" height="2.57" fill="#fff" opacity="0.9"/><rect x="1107.57" y="585.33" width="3.47" height="2.57" fill="#fff" opacity="0.9"/><rect x="1112.05" y="585.33" width="3.47" height="2.57" fill="#fff" opacity="0.9"/><rect x="1116.52" y="585.33" width="3.47" height="2.57" fill="#fff" opacity="0.9"/></g><g opacity="0.85"><rect x="1130" y="575" width="19" height="15" fill="#c8d6ee"/><rect x="1131.10" y="578.20" width="3.47" height="2.57" fill="#fff" opacity="0.9"/><rect x="1135.57" y="578.20" width="3.47" height="2.57" fill="#fff" opacity="0.9"/><rect x="1140.05" y="578.20" width="3.47" height="2.57" fill="#fff" opacity="0.9"/><rect x="1144.52" y="578.20" width="3.47" height="2.57" fill="#fff" opacity="0.9"/><rect x="1131.10" y="581.77" width="3.47" height="2.57" fill="#fff" opacity="0.9"/><rect x="1135.57" y="581.77" width="3.47" height="2.57" fill="#fff" opacity="0.9"/><rect x="1140.05" y="581.77" width="3.47" height="2.57" fill="#fff" opacity="0.9"/><rect x="1144.52" y="581.77" width="3.47" height="2.57" fill="#fff" opacity="0.9"/><rect x="1131.10" y="585.33" width="3.47" height="2.57" fill="#fff" opacity="0.9"/><rect x="1135.57" y="585.33" width="3.47" height="2.57" fill="#fff" opacity="0.9"/><rect x="1140.05" y="585.33" width="3.47" height="2.57" fill="#fff" opacity="0.9"/><rect x="1144.52" y="585.33" width="3.47" height="2.57" fill="#fff" opacity="0.9"/></g><g opacity="0.5"><path d="M1159.5,575 H1170 L1173,578 V591 H1159.5Z" fill="#f4f4f4" stroke="#ddd" stroke-width="0.8"/><rect x="1166" y="584" width="2.5" height="7" fill="#b8e0a0"/><rect x="1169" y="585.5" width="2.5" height="5.5" fill="#f0b890"/><rect x="1172" y="587" width="2.5" height="4" fill="#a0d0f0"/></g><rect x="1185.8" y="572" width="1" height="21.600000000000023" fill="#d3c9ce"/><rect x="1201.5" y="575" width="11.5" height="5" fill="#f4f4f4" stroke="#999" stroke-width="0.8"/><rect x="1199" y="580" width="17" height="9" rx="1.5" fill="#333"/><rect x="1199.5" y="583.5" width="16" height="1.2" fill="#777"/><rect x="1201.5" y="588" width="12" height="4.5" fill="#eee" stroke="#999" stroke-width="0.7"/><rect x="1202.5" y="588.6" width="10" height="1.2" fill="#3a72e0"/><rect x="1227" y="573.8" width="11.5" height="14" fill="#eef0f4" stroke="#aaa" stroke-width="0.8"/><circle cx="1234" cy="582" r="4.6" fill="#5aa0d0" stroke="#555" stroke-width="1.2"/><path d="M1237.5,585.5 L1243.5,591.5" stroke="#555" stroke-width="2.2"/><rect x="1256" y="575" width="6.5" height="16.5" rx="2" fill="#333"/><rect x="1266.3" y="575" width="6.5" height="16.5" rx="2" fill="#333"/><rect x="1262" y="580" width="4.5" height="5" fill="#444"/><rect x="1257" y="582" width="4.5" height="1.2" fill="#777"/><rect x="1267.3" y="582" width="4.5" height="1.2" fill="#777"/><rect x="1285.2" y="575" width="11.5" height="15.5" rx="1" fill="#c0713a" stroke="#8a4a20" stroke-width="0.6"/><rect x="1288" y="573.8" width="6" height="2.8" rx="1" fill="#ddd" stroke="#888" stroke-width="0.5"/><path d="M1289,580.5 H1297.5 L1300.5,583.5 V591.5 H1289Z" fill="#f0f2f6" stroke="#aaa" stroke-width="0.8"/><circle cx="1321.4" cy="583" r="8.5" fill="#3a72e0" stroke="#2a5ac8" stroke-width="0.6"/><text x="1317.6" y="587.6" font-family="Liberation Sans" font-weight="bold" font-size="12" fill="#fff">?</text></svg><!--/TB-->
<div class="t" style="left:787px;top:616px;font-size:19px;color:#000">测试招采项目</div>

<!-- header overlay -->
<div id="header" class="a"></div>
<svg class="a" style="left:55px;top:15px" width="68" height="66" viewBox="0 0 938 910"><circle cx="470" cy="455" r="405" fill="#fff"/><g fill="#919191"><path d="M352,195 C348,191 320,195 300,198 C280,201 252,203 230,215 C208,227 181,248 165,270 C149,292 138,325 135,350 C132,375 139,401 150,420 C161,439 182,456 200,462 C218,468 239,464 255,455 C271,446 288,429 295,410 C302,391 299,362 300,340 C301,318 296,295 300,275 C304,255 316,233 325,220 C334,207 356,199 352,195 Z"/><path d="M110,470 C117,465 142,504 160,520 C178,536 202,545 215,565 C228,585 228,616 235,640 C242,664 249,689 260,710 C271,731 305,765 300,765 C295,765 253,732 230,710 C207,688 178,657 160,630 C142,603 128,577 120,550 C112,523 103,475 110,470 Z"/><path d="M360,440 C359,410 367,375 380,350 C393,325 420,302 440,290 C460,278 477,276 500,278 C523,280 555,285 580,300 C605,315 632,345 650,370 C668,395 680,421 690,450 C700,479 715,532 710,545 C705,558 677,541 660,530 C643,519 625,496 610,480 C595,464 585,444 570,435 C555,426 535,422 520,425 C505,428 492,439 480,455 C468,471 460,502 450,520 C440,538 431,563 420,565 C409,567 395,551 385,530 C375,509 361,470 360,440 Z"/><path d="M330,715 C333,698 340,670 355,660 C370,650 396,648 420,652 C444,656 473,677 500,685 C527,693 556,701 580,700 C604,699 624,690 645,680 C666,670 704,633 705,640 C706,647 672,697 650,720 C628,743 600,766 570,780 C540,794 502,803 470,805 C438,807 402,798 380,790 C358,782 343,772 335,760 C327,748 327,732 330,715 Z"/></g></svg>
<div class="t" style="left:135px;top:34px;font-size:26.2px;font-weight:bold;color:#fff;-webkit-text-stroke:0.7px #fff">兆日供应链平台</div>
<div class="t nav" style="left:459px;top:36px">首页</div>
<div class="t nav" style="left:535px;top:36px">大宗商品</div>
<div class="t nav" style="left:649px;top:36px">招采云</div>
<div class="t nav" style="left:744px;top:36px">物流承运</div>
<div class="t nav" style="left:858px;top:36px">新闻中心</div>
<div class="t nav" style="left:972px;top:36px">服务政策</div>
<div class="t nav" style="left:1086px;top:36px">新手指引</div>
<div class="t nav" style="left:1200px;top:36px">联系我们</div>
<div class="t nav" style="left:1314px;top:36px">关于我们</div>
<svg class="a" style="left:1485px;top:41px" width="22" height="17" viewBox="0 0 22 17"><path d="M2,0 H19 Q21,0 21,2 V3 L11,9.5 L1,3 V2 Q1,0 2,0Z M1,5 L11,11.5 L21,5 V15 Q21,17 19,17 H3 Q1,17 1,15Z" fill="#fff"/></svg>
<div class="t nav" style="left:1506px;top:40px;font-size:19px">3</div>
<div class="t nav" style="left:1552px;top:39px">测试商贸公司</div>
<div class="t nav" style="left:1697px;top:39px">退出登录</div>
<div id="sb" class="a"></div>
<div id="thumb" class="a"></div>
<svg class="a" style="left:1800px;top:840px" width="69" height="70" viewBox="0 0 69 70">
<defs><clipPath id="qc"><circle cx="38" cy="38.5" r="29"/></clipPath></defs>
<circle cx="38" cy="38.5" r="29.3" fill="#e9ebef"/>
<g clip-path="url(#qc)">
<path d="M16.5,50 C16.5,30 25,19.6 38.2,19.6 C51.5,19.6 60,30 60,50 V72 H16.5Z" fill="#c9cdd3"/>
<rect x="15" y="47.7" width="47" height="11" rx="3" fill="#b2b8c0"/>
<rect x="22" y="58" width="32" height="14" fill="#f1f2f4"/>
<rect x="23" y="57" width="10" height="14" fill="#b2b8c0"/>
</g>
<ellipse cx="33.8" cy="33" rx="3.9" ry="5.6" fill="#fff"/><ellipse cx="44.2" cy="33" rx="3.9" ry="5.6" fill="#fff"/>
<ellipse cx="34.3" cy="33.5" rx="1.2" ry="2" fill="#7d8590"/><rect x="42" y="33" width="4" height="1.2" fill="#7d8590"/>
<ellipse cx="37.8" cy="43.5" rx="13.2" ry="3" fill="#fff"/>
<circle cx="38" cy="38.5" r="29.3" fill="none" stroke="#1f86ff" stroke-width="3"/>
</svg>
<div class="a" style="left:1854px;top:9px;width:0;height:0;border-left:5px solid transparent;border-right:5px solid transparent;border-bottom:5px solid #505050"></div>
</body></html>
